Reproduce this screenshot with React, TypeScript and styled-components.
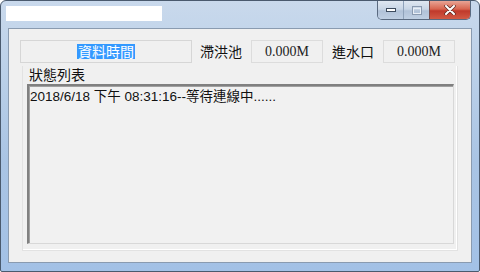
import React from "react";
import styled, { createGlobalStyle } from "styled-components";

const GlobalStyle = createGlobalStyle`
  html, body {
    margin: 0;
    padding: 0;
    width: 480px;
    height: 272px;
    overflow: hidden;
    background: #ffffff;
  }
`;

const cjk = `"Noto Sans CJK TC", "Noto Sans CJK SC", sans-serif`;

const Window = styled.div`
  width: 480px;
  height: 272px;
  box-sizing: border-box;
  display: flex;
  flex-direction: column;
  border: 1px solid #4a5a6e;
  border-radius: 6px 6px 2px 2px;
  background: linear-gradient(180deg, #c9d9ec 0%, #b9cfe8 30%, #a9c4e4 60%, #a3c1e6 100%);
  overflow: hidden;
`;

const TitleBar = styled.div`
  height: 27px;
  display: flex;
  align-items: flex-start;
  padding-left: 5px;
  padding-right: 8px;
`;

const TitleBox = styled.div`
  width: 156px;
  height: 15px;
  margin-top: 5px;
  background: #ffffff;
`;

const Spacer = styled.div`
  flex: 1;
`;

const Controls = styled.div`
  display: flex;
  height: 18px;
  border: 1px solid #5a6a80;
  border-top: none;
  border-radius: 0 0 5px 5px;
  overflow: hidden;
`;

const CtrlButton = styled.div<{ $w: number; $close?: boolean }>`
  width: ${(p) => p.$w}px;
  height: 18px;
  display: flex;
  align-items: center;
  justify-content: center;
  border-left: ${(p) => (p.$close ? "1px solid #7a4a48" : "1px solid #8fa2ba")};
  background: ${(p) =>
    p.$close
      ? "linear-gradient(180deg, #e8a495 0%, #d7654f 45%, #c0392b 55%, #d25a45 100%)"
      : "linear-gradient(180deg, #dfe7f1 0%, #c9d6e6 45%, #b1c2d8 55%, #bfcfe3 100%)"};
  &:first-child {
    border-left: none;
  }
`;

const Client = styled.div`
  flex: 1;
  margin: 0 7px 8px 7px;
  box-sizing: border-box;
  border: 1px solid #8a9bb0;
  background: #f0f0f0;
  display: flex;
  flex-direction: column;
  padding: 11px 12px 11px 11px;
`;

const TopRow = styled.div`
  display: flex;
  align-items: center;
  height: 23px;
`;

const TimeBox = styled.div`
  width: 172px;
  height: 23px;
  box-sizing: border-box;
  border: 1px solid #d6d6d6;
  background: #f0f0f0;
  display: flex;
  align-items: center;
  justify-content: center;
`;

const Selected = styled.span`
  background: #3399ff;
  color: #ffffff;
  font-family: ${cjk};
  font-size: 14px;
  line-height: 15px;
  padding: 0 1px;
`;

const Label = styled.span<{ $ml: number }>`
  margin-left: ${(p) => p.$ml}px;
  font-family: ${cjk};
  font-size: 14px;
  color: #111;
  line-height: 23px;
`;

const ValueBox = styled.div<{ $ml: number }>`
  margin-left: ${(p) => p.$ml}px;
  width: 72px;
  height: 23px;
  box-sizing: border-box;
  border: 1px solid #dcdcdc;
  display: flex;
  align-items: center;
  justify-content: center;
  font-family: "Liberation Serif", serif;
  font-size: 14px;
  color: #222;
`;

const Group = styled.div`
  flex: 1;
  margin: 3px 1px 0 2px;
  border: 1px solid #e2e2e2;
  border-top: none;
  box-shadow: inset -1px -1px 0 #ffffff;
  display: flex;
  flex-direction: column;
  padding: 0 3px 6px 4px;
`;

const GroupTitle = styled.div`
  font-family: ${cjk};
  font-size: 14px;
  color: #111;
  line-height: 16px;
  height: 18px;
  padding-left: 2px;
`;

const ListBox = styled.div`
  flex: 1;
  box-sizing: border-box;
  border-top: 2px solid #808080;
  border-left: 2px solid #808080;
  border-right: 1px solid #d8d8d8;
  border-bottom: 1px solid #d8d8d8;
  box-shadow: inset 1px 1px 0 #a0a0a0;
  background: #f1f1f1;
  padding: 3px 0 0 1px;
`;

const LogLine = styled.div`
  font-family: "Liberation Sans", ${cjk};
  font-size: 13.5px;
  color: #111;
  line-height: 16px;
  white-space: nowrap;
`;

const MinIcon = () => (
  <svg width="10" height="6" viewBox="0 0 10 6">
    <rect x="0.5" y="1.5" width="9" height="3" fill="#ffffff" stroke="#3d4b5e" strokeWidth="1" />
  </svg>
);

const MaxIcon = () => (
  <svg width="10" height="9" viewBox="0 0 10 9">
    <rect x="0.5" y="0.5" width="9" height="8" fill="none" stroke="#8a9ab0" strokeWidth="1" />
    <rect x="1.5" y="2.5" width="7" height="5" fill="none" stroke="#e8eef6" strokeWidth="1" />
  </svg>
);

const CloseIcon = () => (
  <svg width="12" height="10" viewBox="0 0 12 10">
    <path d="M2 1 L10 9 M10 1 L2 9" stroke="#5a2a24" strokeWidth="3.4" strokeLinecap="round" />
    <path d="M2 1 L10 9 M10 1 L2 9" stroke="#ffffff" strokeWidth="2" strokeLinecap="round" />
  </svg>
);

export default function App() {
  return (
    <>
      <GlobalStyle />
      <Window>
        <TitleBar>
          <TitleBox />
          <Spacer />
          <Controls>
            <CtrlButton $w={25}>
              <MinIcon />
            </CtrlButton>
            <CtrlButton $w={25}>
              <MaxIcon />
            </CtrlButton>
            <CtrlButton $w={40} $close>
              <CloseIcon />
            </CtrlButton>
          </Controls>
        </TitleBar>
        <Client>
          <TopRow>
            <TimeBox>
              <Selected>資料時間</Selected>
            </TimeBox>
            <Label $ml={8}>滯洪池</Label>
            <ValueBox $ml={9}>0.000M</ValueBox>
            <Label $ml={9}>進水口</Label>
            <ValueBox $ml={9}>0.000M</ValueBox>
          </TopRow>
          <Group>
            <GroupTitle>狀態列表</GroupTitle>
            <ListBox>
              <LogLine>2018/6/18 下午 08:31:16--等待連線中......</LogLine>
            </ListBox>
          </Group>
        </Client>
      </Window>
    </>
  );
}
